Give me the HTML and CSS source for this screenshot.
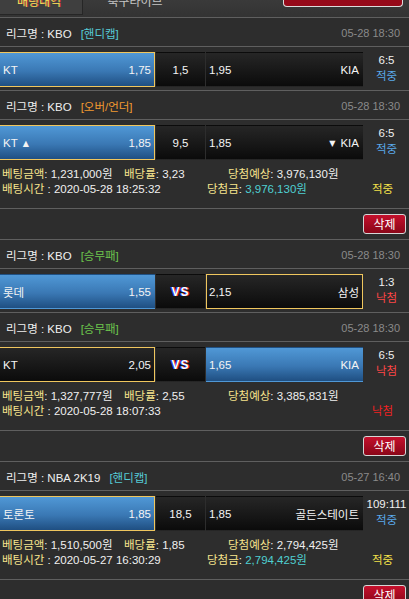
FILE: index.html
```html
<!DOCTYPE html>
<html lang="ko">
<head>
<meta charset="utf-8">
<title>배팅내역</title>
<link rel="stylesheet" href="styles.css">
</head>
<body>
<div class="tabs">
  <div class="tab active"><span>배팅내역</span></div>
  <div class="tab other"><span>축구라이브</span></div>
  <div class="top-btn"></div>
</div>

<section class="group">
  <div class="game">
    <div class="league"><span>리그명 : KBO</span><span class="tag cyan">[핸디캡]</span><span class="date">05-28 18:30</span></div>
    <div class="bet-row">
      <div class="cell blue picked"><span>KT</span><span>1,75</span></div>
      <div class="cell mid">1,5</div>
      <div class="cell dark away"><span>1,95</span><span>KIA</span></div>
      <div class="result"><div>6:5</div><div class="hit">적중</div></div>
    </div>
  </div>
  <div class="game last">
    <div class="league"><span>리그명 : KBO</span><span class="tag orange">[오버/언더]</span><span class="date">05-28 18:30</span></div>
    <div class="bet-row">
      <div class="cell blue picked"><span>KT<i class="arr up">▲</i></span><span>1,85</span></div>
      <div class="cell mid">9,5</div>
      <div class="cell dark away"><span>1,85</span><span><i class="arr down">▼</i>KIA</span></div>
      <div class="result"><div>6:5</div><div class="hit">적중</div></div>
    </div>
  </div>
  <div class="info">
    <div class="info-line l1">
      <span><b>베팅금액</b>: 1,231,000원</span>
      <span><b>배당률</b>: 3,23</span>
      <span><b>당첨예상</b>: 3,976,130원</span>
    </div>
    <div class="info-line l2">
      <span><b>배팅시간</b> : 2020-05-28 18:25:32</span>
      <span><b>당첨금</b>: <em>3,976,130원</em></span>
      <span class="status win">적중</span>
    </div>
  </div>
  <div class="actions"><button class="del" type="button">삭제</button></div>
</section>

<section class="group">
  <div class="game">
    <div class="league"><span>리그명 : KBO</span><span class="tag green">[승무패]</span><span class="date">05-28 18:30</span></div>
    <div class="bet-row">
      <div class="cell blue"><span>롯데</span><span>1,55</span></div>
      <div class="cell mid vs">VS</div>
      <div class="cell dark away picked"><span>2,15</span><span>삼성</span></div>
      <div class="result"><div>1:3</div><div class="miss">낙첨</div></div>
    </div>
  </div>
  <div class="game last">
    <div class="league"><span>리그명 : KBO</span><span class="tag green">[승무패]</span><span class="date">05-28 18:30</span></div>
    <div class="bet-row">
      <div class="cell dark picked"><span>KT</span><span>2,05</span></div>
      <div class="cell mid vs">VS</div>
      <div class="cell blue away"><span>1,65</span><span>KIA</span></div>
      <div class="result"><div>6:5</div><div class="miss">낙첨</div></div>
    </div>
  </div>
  <div class="info">
    <div class="info-line l1">
      <span><b>베팅금액</b>: 1,327,777원</span>
      <span><b>배당률</b>: 2,55</span>
      <span><b>당첨예상</b>: 3,385,831원</span>
    </div>
    <div class="info-line l2">
      <span><b>배팅시간</b> : 2020-05-28 18:07:33</span>
      <span></span>
      <span class="status lose">낙첨</span>
    </div>
  </div>
  <div class="actions"><button class="del" type="button">삭제</button></div>
</section>

<section class="group">
  <div class="game last">
    <div class="league"><span>리그명 : NBA 2K19</span><span class="tag cyan">[핸디캡]</span><span class="date">05-27 16:40</span></div>
    <div class="bet-row">
      <div class="cell blue picked"><span>토론토</span><span>1,85</span></div>
      <div class="cell mid">18,5</div>
      <div class="cell dark away"><span>1,85</span><span>골든스테이트</span></div>
      <div class="result"><div>109:111</div><div class="hit">적중</div></div>
    </div>
  </div>
  <div class="info">
    <div class="info-line l1">
      <span><b>베팅금액</b>: 1,510,500원</span>
      <span><b>배당률</b>: 1,85</span>
      <span><b>당첨예상</b>: 2,794,425원</span>
    </div>
    <div class="info-line l2">
      <span><b>배팅시간</b> : 2020-05-27 16:30:29</span>
      <span><b>당첨금</b>: <em>2,794,425원</em></span>
      <span class="status win">적중</span>
    </div>
  </div>
  <div class="actions"><button class="del" type="button">삭제</button></div>
</section>
</body>
</html>
```

FILE: styles.css
```css
* { box-sizing: border-box; margin: 0; padding: 0; }
html, body { background: #2d2d2d; }
body {
  width: 409px;
  height: 599px;
  overflow: hidden;
  font-family: "Liberation Sans", "Noto Sans CJK KR", sans-serif;
  font-size: 11px;
  color: #e8e8e8;
}

/* top tabs (scrolled, partly hidden) */
.tabs {
  display: flex;
  height: 18px;
  border-bottom: 1px solid #5f5f5f;
  background: linear-gradient(#3a3a3a, #333333);
  overflow: hidden;
}
.tab { height: 15px; overflow: hidden; text-align: center; }
.tab span { display: block; line-height: 14px; margin-top: -5px; font-size: 12px; }
.tab.active {
  width: 83px;
  background: #3f3f3f;
  border-right: 1px solid #262626;
  border-bottom: 1px solid #262626;
}
.tab.active span { color: #f3e55c; text-shadow: 1px 0 #c8303a; padding-right: 4px; }
.tab.other { width: 100px; color: #c4c4c4; padding-left: 4px; }
.top-btn {
  margin-left: auto;
  margin-right: 6px;
  width: 120px;
  height: 7px;
  background: #960a1a;
  border: 1px solid #dcdcdc;
  border-top: none;
  border-radius: 0 0 4px 4px;
}

/* league header */
.league {
  display: flex;
  align-items: center;
  height: 29px;
  padding: 1px 9px 0 6px;
  border-bottom: 1px solid #5f5f5f;
  color: #f0f0f0;
  font-size: 11.5px;
}
.tag { margin-left: 9px; }
.cyan { color: #56cbd6; }
.orange { color: #f29a30; }
.green { color: #6cc44c; }
.date { margin-left: auto; color: #8a8a8a; font-size: 11px; }

.game { border-bottom: 1px solid #5f5f5f; }
.game.last { border-bottom: none; }

/* bet row */
.bet-row {
  display: grid;
  grid-template-columns: 156px 49px 157px 1fr;
  column-gap: 1px;
  height: 35px;
  margin: 5px 0 3px -1px;
}
.cell {
  display: flex;
  align-items: center;
  justify-content: space-between;
  padding: 0 3px;
  border: 1px solid transparent;
  color: #f4f4f4;
  white-space: nowrap;
  font-size: 11.5px;
}
.cell.away { padding: 0 3px 0 2px; }
.blue { background: linear-gradient(#5098d6, #3a78b4 55%, #1f4f82); }
.dark, .mid { background: linear-gradient(#262626, #161616 60%, #0b0b0b); }
.mid { justify-content: center; }
.picked { border-color: #efc65e; }
.vs {
  font-weight: bold;
  font-size: 12px;
  letter-spacing: 1px;
  color: #ffffff;
  text-shadow: -1px 0 #2a48ff, 1px 0 #ff2a2a;
}
.arr { font-style: normal; font-size: 8px; vertical-align: 1px; font-family: "DejaVu Sans", sans-serif; }
.arr.up { margin-left: 5px; }
.arr.down { margin-right: 5px; }

.result {
  text-align: center;
  line-height: 16px;
  color: #f0f0f0;
  font-size: 11.5px;
}
.hit { color: #5aa9ea; }
.miss { color: #ff4646; }

/* info */
.info {
  padding: 4px 0 11px 2px;
  border-bottom: 1px solid #5f5f5f;
  line-height: 15px;
  font-size: 11.5px;
  color: #f0f0f0;
}
.info-line { display: grid; white-space: nowrap; }
.l1 { grid-template-columns: 122px 104px 1fr; }
.l2 { grid-template-columns: 205px 1fr 46px; }
.info b { font-weight: normal; color: #f7e48c; }
.info em { font-style: normal; color: #4fd0d2; }
.status { padding-left: 9px; }
.status.win { color: #f4e14a; }
.status.lose { color: #f02222; }

/* actions */
.actions {
  display: flex;
  justify-content: flex-end;
  padding: 5px 3px;
  border-bottom: 1px solid #5f5f5f;
}
.del {
  width: 43px;
  height: 20px;
  border: 1px solid #d6d6d6;
  border-radius: 3px;
  background: linear-gradient(#c4102c, #a00a20 60%, #8a0618);
  color: #ffffff;
  font-family: "Noto Sans CJK KR", sans-serif;
  font-size: 12px;
  line-height: 18px;
}
```
